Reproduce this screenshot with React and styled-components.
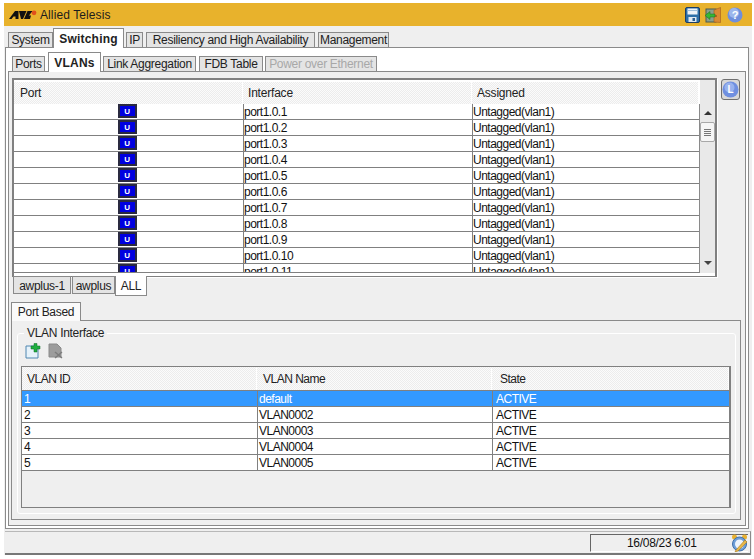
import React from "react";
import styled, { createGlobalStyle } from "styled-components";

const ports = ["1", "2", "3", "4", "5", "6", "7", "8", "9", "10", "11"];
const vlans = [
  ["1", "default", "ACTIVE"],
  ["2", "VLAN0002", "ACTIVE"],
  ["3", "VLAN0003", "ACTIVE"],
  ["4", "VLAN0004", "ACTIVE"],
  ["5", "VLAN0005", "ACTIVE"],
];

const LogoMark = () => (
  <svg width="28" height="10" viewBox="0 0 28 10">
    <polygon points="0,9 6,1 9.5,1 9.5,9 6.5,9 6.5,6.5 4.5,6.5 2.5,9" fill="#111" />
    <polygon points="10,1 17.5,1 14,9 12,9" fill="#111" />
    <polygon points="15,9 18.5,1 23.5,1 20,5.5 22,5.5 21,9" fill="#111" />
    <circle cx="25" cy="2.8" r="2.4" fill="#e0501c" />
  </svg>
);

const SaveIcon = () => (
  <svg width="15" height="16" viewBox="0 0 15 16">
    <rect x="0.5" y="0.5" width="14" height="15" rx="1.5" fill="#2c6fa8" stroke="#1c3f66" />
    <rect x="2.5" y="1.5" width="10" height="6" fill="#eef3f8" />
    <rect x="2.5" y="3" width="10" height="1" fill="#9fc0dc" />
    <rect x="3.5" y="10" width="8" height="5" fill="#dfe8f0" />
    <rect x="7.5" y="11" width="2.5" height="3" fill="#2c5f90" />
  </svg>
);

const DoorIcon = () => (
  <svg width="17" height="16" viewBox="0 0 17 16">
    <rect x="1" y="2" width="10" height="13" fill="#8aa08c" stroke="#4a5a50" />
    <polygon points="9,3 15.5,0.5 15.5,15.5 9,15" fill="#d98a34" stroke="#a05a1c" strokeWidth="0.6" />
    <circle cx="11" cy="9" r="0.8" fill="#6b3a10" />
    <polygon points="0,8.5 5,4.5 5,7 10,7 10,10 5,10 5,12.5" fill="#35b835" stroke="#1c6b1c" strokeWidth="0.5" />
  </svg>
);

const HelpIcon = () => (
  <svg width="16" height="16" viewBox="0 0 16 16">
    <circle cx="8" cy="8" r="7.5" fill="#6f8fdc" />
    <circle cx="7" cy="6" r="5" fill="#9cb6ec" />
    <text x="8" y="12" textAnchor="middle" fontFamily="Liberation Sans" fontWeight="700" fontSize="11" fill="#fff">?</text>
  </svg>
);

const LockIcon = () => (
  <svg width="17" height="17" viewBox="0 0 17 17">
    <circle cx="8.5" cy="8.5" r="8" fill="#6f8fe0" />
    <circle cx="7.5" cy="6.5" r="5" fill="#98b2ee" />
    <text x="8.5" y="12" textAnchor="middle" fontFamily="Liberation Sans" fontWeight="700" fontSize="10" fill="#fff">L</text>
  </svg>
);

const AddIcon = () => (
  <svg width="16" height="16" viewBox="0 0 16 16">
    <polygon points="1,3 10,3 13,6 13,15 1,15" fill="#e6f2fa" stroke="#4f86b0" />
    <polygon points="6,3 9,3 9,0.5 12,0.5 12,3 15,3 15,6 12,6 12,9 9,9 9,6 6,6" fill="#1fae3f" stroke="#0f6b25" strokeWidth="0.5" />
  </svg>
);

const RemoveIcon = () => (
  <svg width="16" height="16" viewBox="0 0 16 16">
    <polygon points="1,1 9,1 13,5 13,14 1,14" fill="#9c9c9c" stroke="#8a8a8a" />
    <path d="M7 9l7 6M14 9l-7 6" stroke="#7b7b7b" strokeWidth="1.4" />
  </svg>
);

const ClockIcon = () => (
  <svg width="17" height="18" viewBox="0 0 17 18">
    <circle cx="3.5" cy="3" r="2.5" fill="#e8b030" />
    <circle cx="13.5" cy="3" r="2.5" fill="#e8b030" />
    <circle cx="8.5" cy="10" r="7" fill="#6f9fd8" stroke="#3f6fa8" />
    <circle cx="8.5" cy="10" r="4.5" fill="#eef4fb" />
    <path d="M5 16L14 6l2 2-9 9-3 1z" fill="#e8b84a" stroke="#a87a1c" strokeWidth="0.6" />
  </svg>
);

export default function App() {
  return (
    <Frame>
      <GlobalStyle />
      <TitleBar>
        <Brand>
          <LogoMark />
          <span>Allied Telesis</span>
        </Brand>
        <TitleIcons>
          <SaveIcon />
          <DoorIcon />
          <HelpIcon />
        </TitleIcons>
      </TitleBar>

      <TopTabs>
        <Tab $w={45}>System</Tab>
        <Tab $w={71} $active>Switching</Tab>
        <Tab $w={17} $gap={2}>IP</Tab>
        <Tab $w={169} $gap={3}>Resiliency and High Availability</Tab>
        <Tab $w={71} $gap={3}>Management</Tab>
      </TopTabs>

      <OuterPanel>
        <SubTabs>
          <Tab $w={33}>Ports</Tab>
          <Tab $w={53} $gap={3} $active>VLANs</Tab>
          <Tab $w={93} $gap={2}>Link Aggregation</Tab>
          <Tab $w={64} $gap={3}>FDB Table</Tab>
          <Tab $w={112} $gap={2} $disabled>Power over Ethernet</Tab>
        </SubTabs>

        <InnerPanel>
          <PortsRow>
            <PortsBox>
              <PortsContent>
                <PortsHead>
                  <HeadCell $pad={6}>Port</HeadCell>
                  <HeadCell $pad={5}>Interface</HeadCell>
                  <HeadCell $pad={5}>Assigned</HeadCell>
                </PortsHead>
                <PortsBody>
                  {ports.map((p) => (
                    <PortRow key={p}>
                      <PortCell>
                        <UChip>U</UChip>
                      </PortCell>
                      <Cell>port1.0.{p}</Cell>
                      <Cell>Untagged(vlan1)</Cell>
                    </PortRow>
                  ))}
                </PortsBody>
              </PortsContent>
              <ScrollBar>
                <ArrowUp />
                <Thumb>
                  <Grip />
                  <Grip />
                  <Grip />
                  <Grip />
                </Thumb>
                <ArrowDown />
              </ScrollBar>
            </PortsBox>
            <SideButton>
              <LockIcon />
            </SideButton>
          </PortsRow>

          <BottomTabs>
            <BottomTab $w={58}>awplus-1</BottomTab>
            <BottomTab $w={43} $gap={1}>awplus</BottomTab>
            <BottomTab $w={32} $active>ALL</BottomTab>
          </BottomTabs>

          <PortBasedTab>Port Based</PortBasedTab>
          <PortPanel>
            <Field>
              <Legend>VLAN Interface</Legend>
              <IconRow>
                <AddIcon />
                <RemoveIcon />
              </IconRow>
              <VlanTable>
                <VlanHead>
                  <HeadCell $pad={5}>VLAN ID</HeadCell>
                  <HeadCell $pad={6}>VLAN Name</HeadCell>
                  <HeadCell $pad={8}>State</HeadCell>
                </VlanHead>
                {vlans.map((v, i) => (
                  <VlanRow key={v[0]} $selected={i === 0}>
                    {v.map((text, n) => (
                      <VlanCell key={n}>{text}</VlanCell>
                    ))}
                  </VlanRow>
                ))}
              </VlanTable>
            </Field>
          </PortPanel>
        </InnerPanel>
      </OuterPanel>

      <StatusBar>
        <TimeField>
          <TimeText>16/08/23 6:01</TimeText>
          <ClockIcon />
        </TimeField>
      </StatusBar>
    </Frame>
  );
}

const GlobalStyle = createGlobalStyle`
  html, body {
    margin: 0;
    background: #fff;
  }
  * {
    box-sizing: border-box;
  }
`;

const Frame = styled.div`
  width: 754px;
  height: 559px;
  overflow: hidden;
  padding: 3px 2px 0 4px;
  font-family: "Liberation Sans", Arial, sans-serif;
  font-size: 12px;
  letter-spacing: -0.3px;
  color: #222;
  background: linear-gradient(#efefef, #efefef) 4px 3px / 748px 552px no-repeat #fff;
`;

const TitleBar = styled.div`
  height: 23px;
  padding: 0 9px 0 5px;
  display: flex;
  align-items: center;
  justify-content: space-between;
  background: #e8b22c;
`;

const Brand = styled.div`
  display: flex;
  align-items: center;
  gap: 3px;
  letter-spacing: 0.1px;
  color: #1c1c1c;
`;

const TitleIcons = styled.div`
  display: flex;
  align-items: center;
  gap: 5px;
`;

const TopTabs = styled.div`
  height: 21px;
  margin: 1px 0 -1px 4px;
  display: flex;
  align-items: flex-end;
  position: relative;
  z-index: 1;
`;

const SubTabs = styled(TopTabs)`
  height: 20px;
  margin: 4px 0 -1px 4px;
`;

const Tab = styled.div`
  width: ${(p) => p.$w}px;
  margin-left: ${(p) => p.$gap || 0}px;
  height: ${(p) => (p.$active ? 20 : 16)}px;
  display: flex;
  align-items: center;
  justify-content: center;
  white-space: nowrap;
  border: 1px solid #8a8a8a;
  border-bottom: ${(p) => (p.$active ? "none" : "1px solid #8a8a8a")};
  background: ${(p) => (p.$active ? "#fff" : "#e4e4e4")};
  font-weight: ${(p) => (p.$active ? 700 : 400)};
  letter-spacing: ${(p) => (p.$active ? 0.2 : -0.3)}px;
  color: ${(p) => (p.$disabled ? "#a8a8a8" : "#222")};
`;

const OuterPanel = styled.div`
  width: 744px;
  height: 482px;
  margin-left: 1px;
  padding: 0 2px;
  border: 1px solid #8a8a8a;
  background: #fff;
`;

const InnerPanel = styled.div`
  height: 455px;
  padding: 6px 5px 6px 2px;
  border: 1px solid #8a8a8a;
  background: #efefef;
`;

const PortsRow = styled.div`
  display: flex;
  align-items: flex-start;
  gap: 4px;
  margin-left: 1px;
`;

const PortsBox = styled.div`
  width: 707px;
  height: 199px;
  display: flex;
  align-items: flex-start;
  border: 2px solid #808080;
  border-bottom-width: 1px;
  background: #fff;
  box-shadow: 1px 1px 0 #fff;
`;

const PortsContent = styled.div`
  width: 686px;
  padding-top: 2px;
  display: flex;
  flex-direction: column;
`;

const PortsHead = styled.div`
  height: 22px;
  width: 685px;
  display: grid;
  grid-template-columns: 229px 229px 227px;
  letter-spacing: -0.2px;
  background: repeating-conic-gradient(#ececec 0 25%, #fbfbfb 0 50%) 0 0 / 2px 2px;
`;

const HeadCell = styled.div`
  display: flex;
  align-items: center;
  padding-left: ${(p) => p.$pad}px;
  border-right: 1px solid #fff;
  color: #222;
`;

const PortsBody = styled.div`
  height: 169px;
  overflow: hidden;
  background: #fff;
  border-right: 1px solid #8a8a8a;
  border-bottom: 1px solid #808080;
`;

const PortRow = styled.div`
  height: 16px;
  display: grid;
  grid-template-columns: 229px 229px 227px;
  border-bottom: 1px solid #808080;
  letter-spacing: -0.5px;
  color: #111;
`;

const Cell = styled.div`
  line-height: 17px;
  border-left: 1px solid #808080;
  white-space: nowrap;
`;

const PortCell = styled.div`
  display: flex;
  justify-content: center;
  padding-right: 3px;
`;

const UChip = styled.div`
  width: 19px;
  height: 14px;
  display: flex;
  align-items: center;
  justify-content: center;
  border: 2px solid #2a2a40;
  background: #0000e0;
  color: #fff;
  font-size: 8px;
  font-weight: 700;
`;

const ScrollBar = styled.div`
  flex: 1;
  height: 193px;
  display: flex;
  flex-direction: column;
  align-items: center;
  padding-top: 31px;
  background: #e9e9e9;
`;

const ArrowUp = styled.div`
  width: 0;
  height: 0;
  border: 4px solid transparent;
  border-top: none;
  border-bottom: 4px solid #333;
`;

const ArrowDown = styled.div`
  width: 0;
  height: 0;
  margin-top: 119px;
  border: 4px solid transparent;
  border-bottom: none;
  border-top: 4px solid #444;
`;

const Thumb = styled.div`
  width: 15px;
  height: 20px;
  margin-top: 7px;
  display: flex;
  flex-direction: column;
  justify-content: center;
  gap: 1px;
  padding: 0 3px;
  border: 1px solid #a8a8a8;
  border-radius: 2px;
  background: #f6f6f6;
`;

const Grip = styled.div`
  height: 1px;
  background: #777;
`;

const SideButton = styled.div`
  width: 19px;
  height: 21px;
  margin-top: 1px;
  display: flex;
  align-items: center;
  justify-content: center;
  border: 1px solid #707070;
  border-radius: 3px;
  background: #d8d8d8;
`;

const BottomTabs = styled.div`
  height: 20px;
  margin: -1px 0 0 2px;
  display: flex;
  align-items: flex-start;
  position: relative;
  z-index: 1;
`;

const BottomTab = styled.div`
  width: ${(p) => p.$w}px;
  margin-left: ${(p) => p.$gap || 0}px;
  height: ${(p) => (p.$active ? 20 : 18)}px;
  padding-top: 1px;
  display: flex;
  align-items: center;
  justify-content: center;
  border: 1px solid #8a8a8a;
  border-top: ${(p) => (p.$active ? "none" : "1px solid #8a8a8a")};
  background: ${(p) => (p.$active ? "#fff" : "#e4e4e4")};
`;

const PortBasedTab = styled.div`
  width: 70px;
  height: 19px;
  margin: 6px 0 -1px;
  display: flex;
  align-items: center;
  justify-content: center;
  position: relative;
  z-index: 1;
  border: 1px solid #8a8a8a;
  border-bottom: none;
  background: #fafafa;
`;

const PortPanel = styled.div`
  width: 730px;
  height: 200px;
  padding: 5px 4px 5px 5px;
  border: 1px solid #8a8a8a;
  background: #efefef;
`;

const Field = styled.fieldset`
  height: 188px;
  margin: 0;
  padding: 0 4px 5px 3px;
  border: 1px solid #fff;
  border-radius: 3px;
`;

const Legend = styled.legend`
  margin-left: 3px;
  padding: 0 3px;
  line-height: 14px;
  color: #222;
`;

const IconRow = styled.div`
  height: 26px;
  padding: 3px 0 0 4px;
  display: flex;
  align-items: flex-start;
  gap: 7px;
`;

const VlanTable = styled.div`
  height: 142px;
  border: 1px solid #808080;
  border-width: 1px 2px 1px 1px;
`;

const VlanHead = styled.div`
  height: 24px;
  padding-top: 1px;
  display: grid;
  grid-template-columns: 235px 235px 1fr;
  border-bottom: 1px solid #808080;
  letter-spacing: -0.5px;
  background: repeating-conic-gradient(#ececec 0 25%, #fbfbfb 0 50%) 0 0 / 2px 2px;
`;

const VlanRow = styled.div`
  height: 16px;
  display: grid;
  grid-template-columns: 235px 235px 1fr;
  border-bottom: 1px solid #808080;
  letter-spacing: -0.5px;
  background: ${(p) => (p.$selected ? "#3399ff" : "#fff")};
  color: ${(p) => (p.$selected ? "#fff" : "#111")};
`;

const VlanCell = styled.div`
  padding-left: 1px;
  line-height: 16px;
  border-left: 1px solid #808080;
  &:first-child {
    border-left: none;
    padding-left: 2px;
  }
  &:last-child {
    padding-left: 3px;
  }
`;

const StatusBar = styled.div`
  height: 24px;
  width: 746px;
  margin: 2px 0 0 1px;
  padding: 2px 2px 2px 585px;
  border-top: 1px solid #b8b8b8;
  border-right: 1px solid #8a8a8a;
  border-bottom: 2px solid #777;
`;

const TimeField = styled.div`
  height: 18px;
  display: flex;
  align-items: center;
  justify-content: space-between;
  border-left: 1px solid #666;
  border-top: 1px solid #666;
  border-bottom: 1px solid #fff;
`;

const TimeText = styled.span`
  margin-left: 36px;
  color: #111;
`;
